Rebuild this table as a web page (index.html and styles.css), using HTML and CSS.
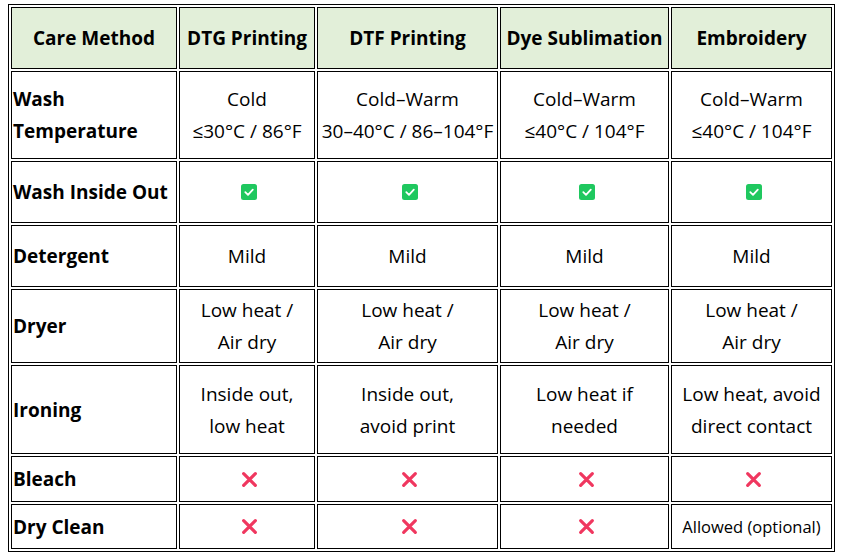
FILE: index.html
```html
<!DOCTYPE html>
<html>
<head>
<meta charset="utf-8">
<link rel="stylesheet" href="styles.css">
</head>
<body>
<table class="care">
  <colgroup>
    <col class="c1"><col class="c2"><col class="c3"><col class="c4"><col class="c5">
  </colgroup>
  <tr class="r-head">
    <th>Care Method</th><th>DTG Printing</th><th>DTF Printing</th><th>Dye Sublimation</th><th>Embroidery</th>
  </tr>
  <tr class="r-temp">
    <td class="label">Wash<br>Temperature</td>
    <td>Cold<br>≤30°C / 86°F</td>
    <td>Cold–Warm<br>30–40°C / 86–104°F</td>
    <td>Cold–Warm<br>≤40°C / 104°F</td>
    <td>Cold–Warm<br>≤40°C / 104°F</td>
  </tr>
  <tr class="r-inside">
    <td class="label">Wash Inside Out</td>
    <td><svg class="ico" viewBox="0 0 16 16"><rect width="16" height="16" rx="2.5" fill="#1fc85f"/><path d="M4.3 8.2 L7 10.8 L11.8 5.6" fill="none" stroke="#fff" stroke-width="1.8" stroke-linecap="round" stroke-linejoin="round"/></svg></td>
    <td><svg class="ico" viewBox="0 0 16 16"><rect width="16" height="16" rx="2.5" fill="#1fc85f"/><path d="M4.3 8.2 L7 10.8 L11.8 5.6" fill="none" stroke="#fff" stroke-width="1.8" stroke-linecap="round" stroke-linejoin="round"/></svg></td>
    <td><svg class="ico" viewBox="0 0 16 16"><rect width="16" height="16" rx="2.5" fill="#1fc85f"/><path d="M4.3 8.2 L7 10.8 L11.8 5.6" fill="none" stroke="#fff" stroke-width="1.8" stroke-linecap="round" stroke-linejoin="round"/></svg></td>
    <td><svg class="ico" viewBox="0 0 16 16"><rect width="16" height="16" rx="2.5" fill="#1fc85f"/><path d="M4.3 8.2 L7 10.8 L11.8 5.6" fill="none" stroke="#fff" stroke-width="1.8" stroke-linecap="round" stroke-linejoin="round"/></svg></td>
  </tr>
  <tr class="r-det">
    <td class="label">Detergent</td>
    <td>Mild</td><td>Mild</td><td>Mild</td><td>Mild</td>
  </tr>
  <tr class="r-dry">
    <td class="label">Dryer</td>
    <td>Low heat /<br>Air dry</td>
    <td>Low heat /<br>Air dry</td>
    <td>Low heat /<br>Air dry</td>
    <td>Low heat /<br>Air dry</td>
  </tr>
  <tr class="r-iron">
    <td class="label">Ironing</td>
    <td>Inside out,<br>low heat</td>
    <td>Inside out,<br>avoid print</td>
    <td>Low heat if<br>needed</td>
    <td>Low heat, avoid<br>direct contact</td>
  </tr>
  <tr class="r-bleach">
    <td class="label">Bleach</td>
    <td><svg class="x" viewBox="0 0 16 16"><path d="M2.5 2.5 L13.5 13.5 M13.5 2.5 L2.5 13.5" stroke="#f0375f" stroke-width="3" stroke-linecap="round"/></svg></td>
    <td><svg class="x" viewBox="0 0 16 16"><path d="M2.5 2.5 L13.5 13.5 M13.5 2.5 L2.5 13.5" stroke="#f0375f" stroke-width="3" stroke-linecap="round"/></svg></td>
    <td><svg class="x" viewBox="0 0 16 16"><path d="M2.5 2.5 L13.5 13.5 M13.5 2.5 L2.5 13.5" stroke="#f0375f" stroke-width="3" stroke-linecap="round"/></svg></td>
    <td><svg class="x" viewBox="0 0 16 16"><path d="M2.5 2.5 L13.5 13.5 M13.5 2.5 L2.5 13.5" stroke="#f0375f" stroke-width="3" stroke-linecap="round"/></svg></td>
  </tr>
  <tr class="r-clean">
    <td class="label">Dry Clean</td>
    <td><svg class="x" viewBox="0 0 16 16"><path d="M2.5 2.5 L13.5 13.5 M13.5 2.5 L2.5 13.5" stroke="#f0375f" stroke-width="3" stroke-linecap="round"/></svg></td>
    <td><svg class="x" viewBox="0 0 16 16"><path d="M2.5 2.5 L13.5 13.5 M13.5 2.5 L2.5 13.5" stroke="#f0375f" stroke-width="3" stroke-linecap="round"/></svg></td>
    <td><svg class="x" viewBox="0 0 16 16"><path d="M2.5 2.5 L13.5 13.5 M13.5 2.5 L2.5 13.5" stroke="#f0375f" stroke-width="3" stroke-linecap="round"/></svg></td>
    <td class="small">Allowed (optional)</td>
  </tr>
</table>
</body>
</html>
```
FILE: styles.css
```css
html, body {
  background: #fff;
}
body {
  margin: 4px 0 0 8px;
  font-family: "Open Sans", "Noto Sans", sans-serif;
  color: #000;
}
.care {
  table-layout: fixed;
  width: 827px;
  border-collapse: separate;
  border-spacing: 2px;
  border: 1px solid #000;
  font-size: 19px;
  line-height: 32px;
}
.c1 { width: 166px; }
.c2 { width: 136px; }
.c3 { width: 181px; }
.c4 { width: 169px; }
.c5 { width: 161px; }
.care th, .care td {
  border: 1px solid #000;
  padding: 0 1px;
  text-align: center;
  vertical-align: middle;
  white-space: nowrap;
}
.care th {
  background: #e2efd9;
  font-weight: 700;
}
.care td.label {
  text-align: left;
  font-weight: 700;
}
.care td.small {
  font-size: 16.5px;
}
.r-head { height: 62px; }
.r-temp { height: 88px; }
.r-inside { height: 62px; }
.r-det { height: 62px; }
.r-dry { height: 74px; }
.r-iron { height: 89px; }
.r-bleach { height: 46px; }
.r-clean { height: 45px; }
.ico {
  width: 16px;
  height: 16px;
  display: block;
  margin: 0 auto;
  padding-left: 4px;
}
.x {
  width: 17px;
  height: 17px;
  display: block;
  margin: 0 auto;
  padding-left: 4px;
}
```
